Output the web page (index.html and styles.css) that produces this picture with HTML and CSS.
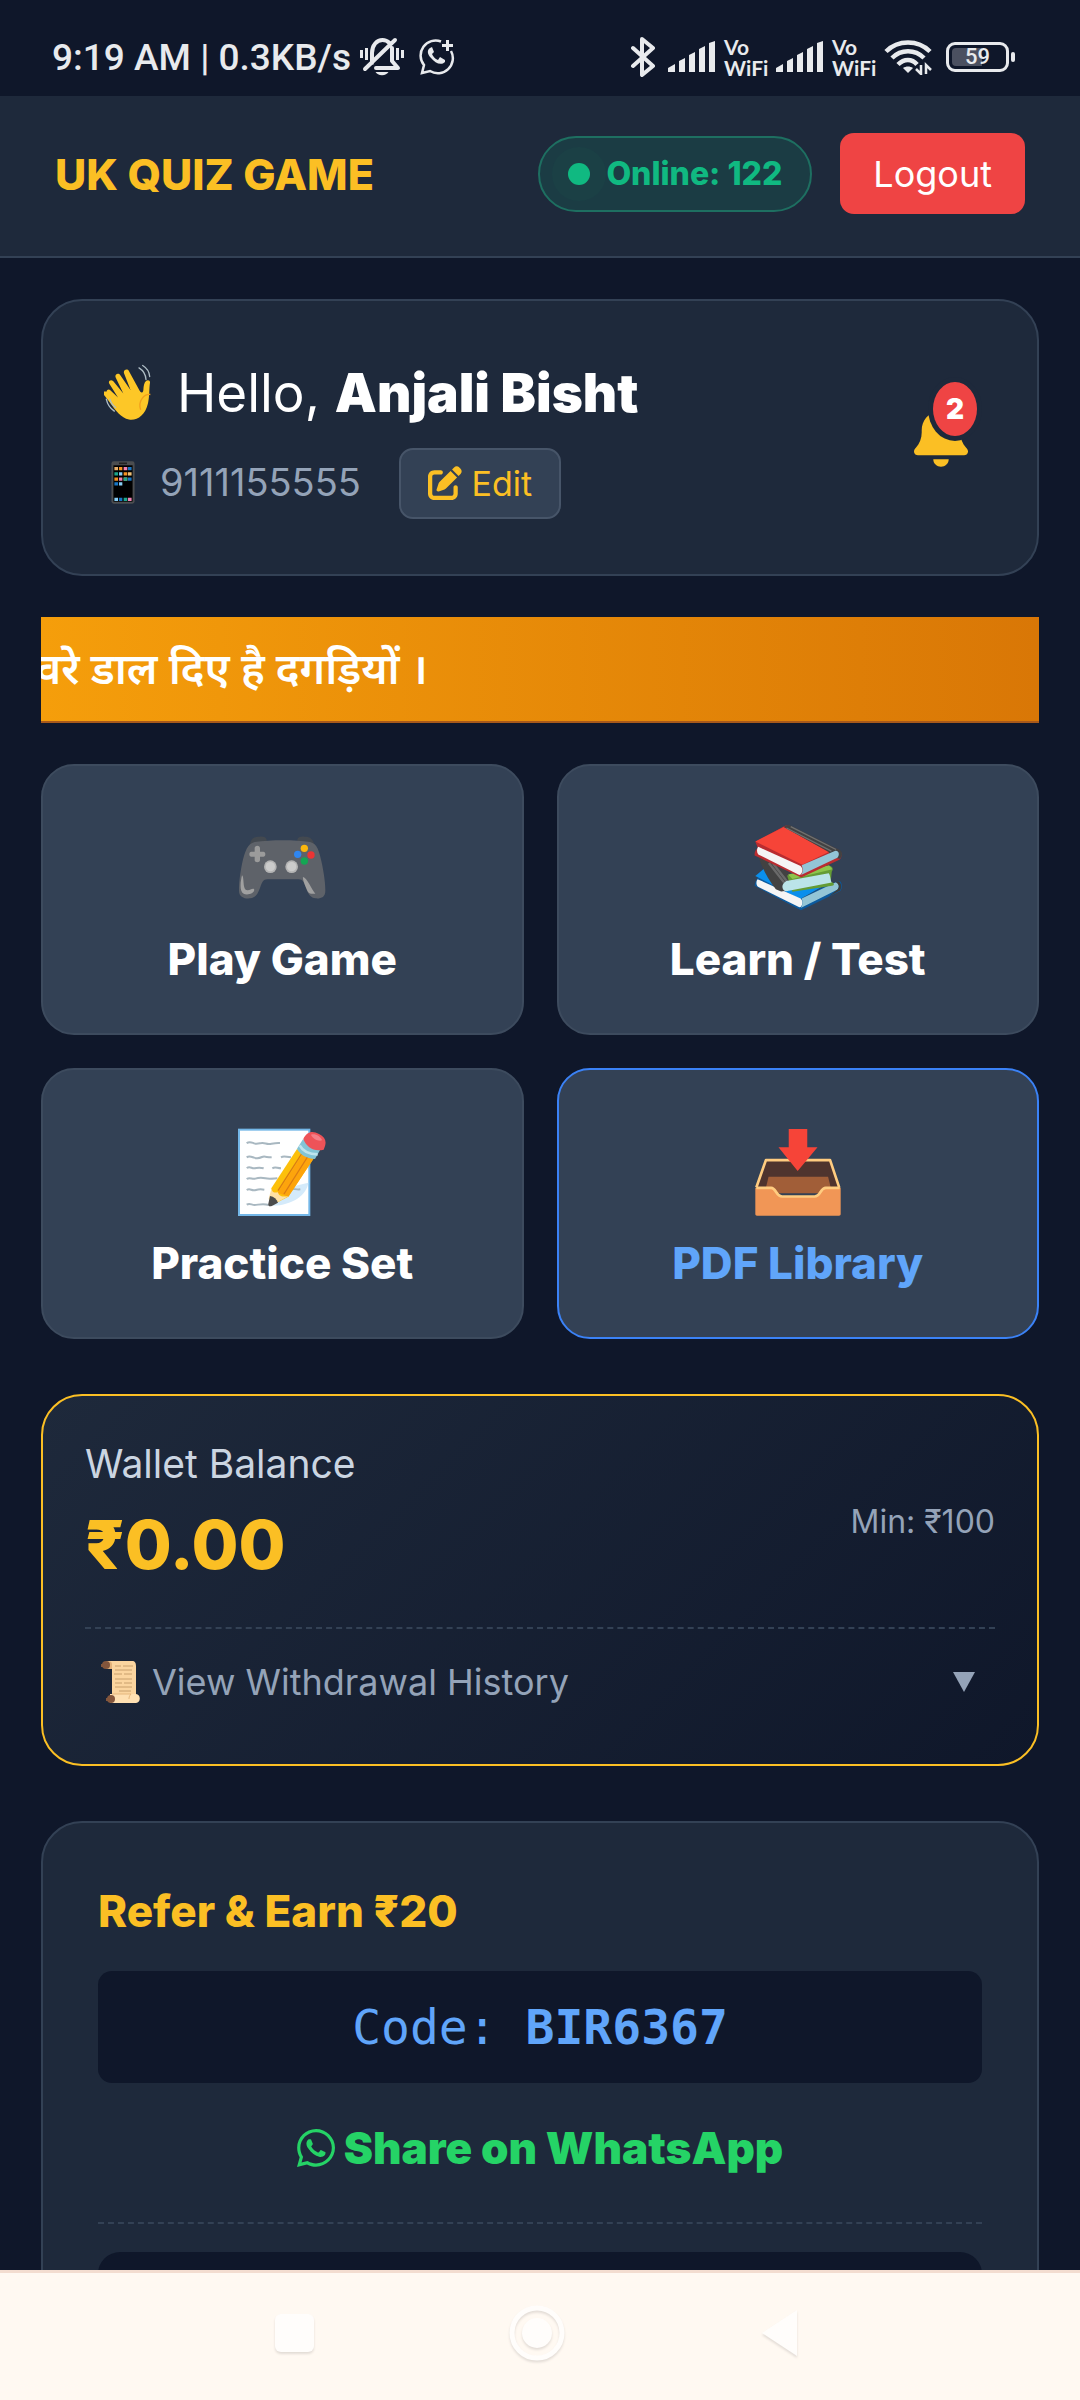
FILE: index.html
```html
<!DOCTYPE html>
<html lang="en">
<head>
<meta charset="UTF-8" />
<meta name="viewport" content="width=device-width, initial-scale=1" />
<title>UK Quiz Game</title>
<link rel="stylesheet" href="styles.css">
</head>
<body>

<div class="status-bar">
  <div class="status-left">
    <span>9:19 AM | 0.3KB/s</span>
    <svg width="46" height="40" viewBox="356 38 46 40" fill="none" stroke="#e8eaed">
      <path d="M358.500 51v8M363.500 49v12M394.500 49v12M399.500 51v8" stroke-width="3"/>
      <path d="M369 64v-10c0-8 5-13 10.500-13 3 0 5 1 7 3M389 49v13l6 7h-22M362 70l30-29" stroke-width="4" stroke-linecap="round" stroke-linejoin="round"/>
      <path d="M372.500 73h13a7 5 0 0 1-13 0z" fill="#e8eaed" stroke="none"/>
    </svg>
    <svg width="36" height="36" viewBox="416 40 36 36" fill="none" stroke="#e8eaed">
      <path d="M438 42.500A15 15 0 0 0 421 66l-2 8 8-2a15 15 0 0 0 21-20" stroke-width="2.500"/>
      <path d="M444.500 41v11M439 46.500h11" stroke-width="3"/>
      <path d="M427 49c-3 2-3 6 1 10 4 5 10 8 14 4l0-2-5-3-2 3c-3-1-5-4-6-6l2-2-2-5z" fill="#e8eaed" stroke="none"/>
    </svg>
  </div>
  <div class="status-right">
    <svg width="26" height="40" viewBox="629 37 26 40" fill="none" stroke="#e8eaed" stroke-width="4" stroke-linejoin="round" stroke-linecap="round">
      <path d="M632 48l20 18-11 9V39l11 9-20 18"/>
    </svg>
    <svg class="signal" width="48" height="32" viewBox="0 0 48 32" fill="#e8eaed">
      <path d="M0 31v-4l7-4v8zM11 31V20l6-3v14zM21 31V14l6-3v20zM31 31V8l6-3v26zM41 31V2l6-2v31z"/>
    </svg>
    <span class="vowifi"><span>Vo</span><span>WiFi</span></span>
    <svg class="signal" width="48" height="32" viewBox="0 0 48 32" fill="#e8eaed">
      <path d="M0 31v-4l7-4v8zM11 31V20l6-3v14zM21 31V14l6-3v20zM31 31V8l6-3v26zM41 31V2l6-2v31z"/>
    </svg>
    <span class="vowifi"><span>Vo</span><span>WiFi</span></span>
    <svg class="wifi" width="48" height="36" viewBox="884 40 48 36" fill="none" stroke="#e8eaed">
      <path d="M886 52.500c12-12 32-12 44 0M892 59c9-9 23-9 32 0M898 65.500c6-6 14-6 19 0" stroke-width="4.500"/>
      <path d="M903 69c3-2 7-2 10 0l-5 5z" fill="#e8eaed" stroke="none"/>
      <path d="M921 66v9l-5-5M926 75v-9l5 5" stroke-width="2.500"/>
    </svg>
    <span class="battery"><span class="battery-level">59</span></span>
  </div>
</div>

<header class="top-bar">
  <h1 class="logo">UK QUIZ GAME</h1>
  <div class="top-actions">
    <span class="online"><span class="dot"></span>Online: 122</span>
    <button class="logout-btn">Logout</button>
  </div>
</header>

<main class="content">

  <section class="card profile">
    <div>
      <p class="hello">
        <svg class="hand" width="52" height="57" viewBox="27 30 156 170">
          <path d="M35 112c0-6 7-8 11-4L69 130 43 89c-5-9 5-15 12-8l30 37-23-48c-4-10 8-15 14-7l31 45-20-51c-3-10 10-15 15-6l32 59c4 8 10 6 11-2 1-13 2-23 9-28 5-4 12-1 11 6-3 17-1 42-6 61-8 36-33 53-57 49-24-4-40-27-57-50-8-12-23-26-23-34z" fill="#fdc727"/>
          <path d="M166 121c-19-2-38 19-29 46" fill="none" stroke="#f2a01c" stroke-width="4"/>
          <path d="M34 135c3 15 12 28 24 36M45 135c2 10 8 19 17 25M132 41c13 8 20 20 21 35M143 34c13 8 20 18 21 33" fill="none" stroke="#aebdc5" stroke-width="4" stroke-linecap="round"/>
        </svg>
        Hello, <strong>Anjali Bisht</strong>
      </p>
      <div class="phone-row">
        <span class="phone">
          <svg class="mobile" width="24" height="43" viewBox="48 311 72 130">
            <rect x="49" y="312" width="70" height="128" rx="7" fill="#4b4d50"/>
            <rect x="55" y="324" width="58" height="110" fill="#000"/>
            <path d="M72 318h24" stroke="#222" stroke-width="5"/>
            <path d="M58 329h11v10H58zM86 361h11v10H86z" fill="#e8b06d"/>
            <path d="M72 329h10v10H72zM86 345h11v10H86zM58 361h11v10H58z" fill="#f59322"/>
            <path d="M86 329h11v10H86zM72 361h10v10H72zM99 422h11v10H99z" fill="#f183b4"/>
            <path d="M99 329h11v10H99zM58 375h11v10H58zM99 361h11v10H99zM72 422h10v10H72z" fill="#1976c4"/>
            <path d="M58 345h11v10H58zM86 361h11v10H86zM86 422h11v10H86z" fill="#1da68c"/>
            <path d="M72 345h10v10H72zM72 375h10v10H72zM58 422h11v10H58z" fill="#87cdf4"/>
            <path d="M99 345h11v10H99z" fill="#efc078"/>
          </svg>9111155555
        </span>
        <button class="edit-btn">
          <svg width="34" height="34" viewBox="0 0 512 512" fill="currentColor"><path d="M471.6 21.7c-21.9-21.9-57.3-21.9-79.2 0L362.3 51.700l97.900 97.900 30.100-30.100c21.900-21.900 21.900-57.300 0-79.200L471.600 21.700zm-299.200 220c-6.100 6.100-10.800 13.600-13.500 21.900l-29.600 88.800c-2.900 8.600-.6 18.100 5.800 24.600s15.900 8.700 24.600 5.800l88.800-29.600c8.200-2.700 15.700-7.400 21.900-13.500L437.700 172.300 339.700 74.300 172.400 241.700zM96 64C43 64 0 107 0 160V416c0 53 43 96 96 96H352c53 0 96-43 96-96V320c0-17.700-14.300-32-32-32s-32 14.300-32 32v96c0 17.700-14.300 32-32 32H96c-17.700 0-32-14.300-32-32V160c0-17.700 14.300-32 32-32h96c17.700 0 32-14.300 32-32s-14.300-32-32-32H96z"/></svg>
          Edit
        </button>
      </div>
    </div>
    <button class="bell-btn" aria-label="Notifications">
      <svg width="54" height="62" viewBox="0 0 448 512" fill="currentColor"><path d="M224 0c-17.700 0-32 14.300-32 32V51.200C119 66 64 130.600 64 208v18.800c0 47-17.300 92.400-48.500 127.600l-7.400 8.300c-8.400 9.400-10.400 22.900-5.300 34.400S19.400 416 32 416H416c12.600 0 24-7.400 29.200-18.900s3.100-25-5.300-34.400l-7.400-8.300C401.300 319.200 384 273.900 384 226.800V208c0-77.400-55-142-128-156.800V32c0-17.700-14.300-32-32-32zm45.300 493.300c12-12 18.700-28.300 18.700-45.300H224 160c0 17 6.700 33.300 18.700 45.300s28.300 18.700 45.300 18.700s33.300-6.700 45.300-18.700z"/></svg>
      <span class="badge">2</span>
    </button>
  </section>

  <div class="ticker" lang="hi"><span>वरे डाल दिए है दगड़ियों ।</span></div>

  <nav class="menu">
    <a href="#" class="menu-item">
      <svg width="88" height="88" viewBox="116 130 264 264">
        <path d="M152 190c4-18 14-22 28-22 14-1 20 2 22 9v14zM344 190c-4-18-14-22-28-22-14-1-20 2-22 9v14z" fill="#434950"/>
        <path d="M166 184c50-7 120-7 166 0 22 5 28 28 36 66 7 35 10 60 10 80 0 20-13 24-29 23-15-2-21-10-29-31-6-17-9-26-22-26H204c-13 0-16 9-22 26-8 21-14 29-29 31-16 2-34-3-34-23 0-20 2-45 9-80 8-38 17-61 38-66z" fill="#5e6269"/>
        <path d="M174 195c5 0 8 3 8 8v10h10c8 0 8 15 0 15h-10v10c0 9-16 9-16 0v-10h-10c-8 0-8-15 0-15h10v-10c0-5 3-8 8-8z" fill="#9b9b9b"/>
        <g fill="#b4b4b4"><circle cx="213" cy="258" r="19"/><circle cx="277" cy="258" r="19"/></g>
        <g fill="#cbcbcb"><circle cx="213" cy="258" r="14"/><circle cx="277" cy="258" r="14"/></g>
        <circle cx="315" cy="203" r="11" fill="#fcb70d"/>
        <circle cx="295" cy="221" r="11" fill="#2f86f0"/>
        <circle cx="335" cy="223" r="11" fill="#ec3434"/>
        <circle cx="315" cy="241" r="11" fill="#13a653"/>
        <path d="M128 284c8 5 0 46 17 45 8 0 12-6 19-4 5 14-22 20-31 14-14-8-9-38-5-55zM311 289c12 2 26 38 37 50-13 2-20-1-24-9-6-14-15-34-13-41z" fill="#a0a0a0"/>
      </svg>
      Play Game
    </a>
    <a href="#" class="menu-item">
      <svg width="88" height="88" viewBox="160 131 266 266">
        <path d="M162 318c0-10 6-20 10-26l132 64 78-42 38-10c8 8 7 24 0 30l-118 58z" fill="#0c5a9e"/>
        <path d="M164 288l26-22 190 46-80 46z" fill="#0a8fec"/>
        <path d="M171 298l130 58c9 8 6 25-4 27L172 321c-6-5-6-18-1-23z" fill="#f5f5f5"/>
        <path d="M304 356l102-48c10-3 14 12 7 21l-112 56c6-7 7-22 3-29z" fill="#93c5d6"/>
        <path d="M386 350l33-17c7-8 6-22-3-28l-9 3c10 4 12 14 6 20z" fill="#3c3c3c"/>
        <path d="M174 231l22 7 76 44-8 50-22 3-16-7c-24-29-44-70-52-97z" fill="#424242"/>
        <path d="M205 249l46 59M218 251l42 54" stroke="#6a6a6a" stroke-width="7"/>
        <path d="M260 287l130-29c10 3 9 12 5 17l-3 30c12 5 12 12 4 13l-120 18z" fill="#659c35"/>
        <path d="M263 284l124-28 10 12-121 29z" fill="#8dc54b"/>
        <path d="M258 303l128-23c5 6 5 22 9 28l-138 26c-14-3-16-22 1-31z" fill="#bbe4e9"/>
        <path d="M162 226c-1-10 2-18 10-22l-8-19 84-46c8-5 18-5 26 0l145 72c8 6 8 21-1 28l-115 54z" fill="#b92c30"/>
        <path d="M164 184l86-44 136 76-80 38z" fill="#f64438"/>
        <path d="M250 140c7-5 16-7 24-3l146 73c8 6 8 20-1 26l-29-6-4-14z" fill="#424242"/>
        <path d="M258 143l136 70M271 139l137 69" stroke="#707070" stroke-width="4"/>
        <path d="M173 200l128 58c9 9 5 25-4 27L173 223c-5-6-5-18 0-23z" fill="#f5f5f5"/>
        <path d="M304 256l102-44c11-1 14 13 6 21l-110 52c7-7 6-20 2-29z" fill="#93c5d6"/>
      </svg>
      Learn / Test
    </a>
    <a href="#" class="menu-item">
      <svg width="88" height="88" viewBox="26 36 264 264">
        <rect x="29" y="41" width="211" height="256" fill="#fff" stroke="#74b7e8" stroke-width="6"/>
        <path d="M237 200c-4 34-45 68-108 69l70-60z" fill="#d4eafa"/>
        <g fill="none" stroke="#a9b8c1" stroke-width="6">
          <path d="M52 82c8-7 14-3 22 0s16 0 24-1 14 4 22 3 18-4 32-3"/>
          <path d="M52 124c8-6 14-2 22 1s16 2 24-2 16 2 29 1M155 124c8-5 14-1 30 0"/>
          <path d="M52 156c10-6 14 1 22 1s12-4 29 0M129 157c9-6 14 0 26 0"/>
          <path d="M52 189c10-7 16 2 26-1s20-3 30-1 18 1 36 0"/>
          <path d="M52 222c10-6 14 2 22 1s12-5 31-2M180 221c12-6 18 1 33-1"/>
          <path d="M52 266c10-6 14 1 24 1s24-6 42 0"/>
        </g>
        <path d="M126 217l77-118 53 24-79 119-53 27z" fill="#fdc00b"/>
        <path d="M145 230l84-130 27 23-79 119z" fill="#fda40c"/>
        <path d="M146 224l82-128M164 234l80-126" stroke="#db7c14" stroke-width="4"/>
        <path d="M128 212c-2 15 4 20 18 17 2 10 10 16 32 11l-54 30-6-22z" fill="#ffe0a4"/>
        <path d="M122 240l-5 23c-1 8 4 10 12 6l17-9c-4-11-12-18-24-20z" fill="#4b4b4b"/>
        <path d="M203 98l18-28 55 25-19 34c-26-2-45-13-54-31z" fill="#83c4d5"/>
        <path d="M211 88c9 17 29 27 54 27" fill="none" stroke="#bfe4ed" stroke-width="8"/>
        <path d="M222 69c10-23 28-26 47-15 20 11 25 23 14 47-30 7-51-7-61-32z" fill="#ee5358"/>
        <path d="M245 56c10-5 30 4 33 17-11 4-29-5-33-17z" fill="#f47f88"/>
      </svg>
      Practice Set
    </a>
    <a href="#" class="menu-item active">
      <svg width="88" height="88" viewBox="160 1040 266 266">
        <path d="M200 1136h188l30 86H168z" fill="#4f342e"/>
        <path d="M204 1187h180l12 50H192z" fill="#a15e38"/>
        <path d="M167 1220l29-83h194l28 84" fill="none" stroke="#ffcc80" stroke-width="8" stroke-linejoin="round"/>
        <path d="M164 1221h48c15 0 14 26 33 26h98c19 0 17-26 34-26h45v79c0 3-2 5-5 5H169c-3 0-5-2-5-5z" fill="#f19656"/>
        <path d="M167 1221h45c15 0 14 26 33 26h98c19 0 17-26 34-26h42" fill="none" stroke="#ffcc80" stroke-width="8"/>
        <path d="M265 1043h56v55h31l-60 72-58-72h31z" fill="#f64438"/>
      </svg>
      PDF Library
    </a>
  </nav>

  <section class="card wallet">
    <div class="wallet-top">
      <div>
        <p class="wallet-label">Wallet Balance</p>
        <p class="wallet-amount">₹0.00</p>
      </div>
      <span class="wallet-min">Min: ₹100</span>
    </div>
    <button class="history-btn">
      <svg width="39" height="44" viewBox="0 0 39 44">
        <path d="M5 1h26c3 0 4 2 4 5v28H11V9H5z" fill="#fbd59f"/>
        <path d="M11 9V4c0-2-2-3-4-3h-2v8z" fill="#e3b27a"/>
        <path d="M9 34h26c5 0 5 9 0 9H9z" fill="#ffe0b2"/>
        <path d="M11 34h19c-2 2-2 4-2 5" fill="none" stroke="#e5b67d" stroke-width="1"/>
        <path d="M14 6h6M22 6h10M14 10h17M13 14h8M23 14h8M14 19h17M14 23h7M23 23h8M14 27h17M18 31h12" stroke="#c9a06c" stroke-width="1"/>
        <g fill="#84563c"><circle cx="5" cy="5" r="4"/><circle cx="10" cy="39" r="4"/><path d="M0 4h3v3H0zM5 38h3v3H5z"/></g>
      </svg>
      <span>View Withdrawal History</span>
      <svg class="arrow" width="22" height="20" viewBox="0 0 22 20" fill="currentColor"><path d="M0 0h22L11 20z"/></svg>
    </button>
  </section>

  <section class="card refer">
    <h2 class="refer-title">Refer &amp; Earn ₹20</h2>
    <div class="code-box">Code: <b>BIR6367</b></div>
    <a href="#" class="share-link">
      <svg width="38" height="44" viewBox="0 0 448 512" fill="currentColor"><path d="M380.900 97.100C339 55.100 283.200 32 223.900 32c-122.400 0-222 99.600-222 222 0 39.100 10.200 77.300 29.600 111L0 480l117.700-30.900c32.400 17.700 68.900 27 106.100 27h.1c122.300 0 224.100-99.600 224.100-222 0-59.300-25.200-115-67.100-157zm-157 341.600c-33.200 0-65.700-8.900-94-25.700l-6.700-4-69.800 18.300L72 359.200l-4.400-7c-18.500-29.400-28.200-63.300-28.200-98.200 0-101.700 82.800-184.500 184.600-184.500 49.300 0 95.600 19.200 130.400 54.100 34.800 34.900 56.200 81.200 56.100 130.500 0 101.800-84.900 184.600-186.600 184.600zm101.200-138.200c-5.500-2.800-32.800-16.200-37.900-18-5.100-1.900-8.800-2.800-12.500 2.800-3.700 5.600-14.300 18-17.600 21.800-3.200 3.700-6.500 4.200-12 1.400-32.600-16.300-54-29.100-75.500-66-5.700-9.800 5.700-9.100 16.300-30.300 1.800-3.700.9-6.900-.5-9.700-1.400-2.800-12.500-30.100-17.100-41.200-4.500-10.800-9.100-9.300-12.500-9.300-3.200-.2-6.900-.2-10.600-.2-3.700 0-9.700 1.400-14.800 6.900-5.100 5.600-19.400 19-19.400 46.300 0 27.300 19.900 53.700 22.600 57.400 2.800 3.700 39.100 59.700 94.800 83.800 35.200 15.200 49 16.500 66.600 13.900 10.700-1.600 32.800-13.400 37.400-26.400 4.600-13 4.600-24.100 3.200-26.400-1.300-2.500-5-3.900-10.500-6.600z"/></svg>
      Share on WhatsApp
    </a>
    <div class="refer-stats"></div>
  </section>

</main>

<footer class="nav-bar">
  <button aria-label="Recent apps"><svg width="60" height="60" viewBox="0 0 60 60"><rect x="11" y="11" width="39" height="38" rx="6"/></svg></button>
  <button aria-label="Home"><svg width="60" height="60" viewBox="0 0 60 60"><circle class="ring" cx="30" cy="30" r="25"/><circle cx="30" cy="30" r="15"/></svg></button>
  <button aria-label="Back"><svg width="60" height="60" viewBox="0 0 60 60"><path d="M12 30L47 7v46z"/></svg></button>
</footer>

</body>
</html>
```
FILE: styles.css
```css
* {
  box-sizing: border-box;
}
body {
  font-family: Inter, "Noto Sans", sans-serif;
  background: #0f172a;
  color: #fff;
  margin: 0;
  height: 100vh;
  display: flex;
  flex-direction: column;
  overflow: hidden;
}
h1, h2, p {
  margin: 0;
}
a {
  text-decoration: none;
}
button {
  font-family: inherit;
  cursor: pointer;
}
svg {
  flex: none;
}

/* phone status bar */
.status-bar {
  display: flex;
  justify-content: space-between;
  align-items: center;
  height: 96px;
  padding: 18px 71px 0 52px;
  font-family: Roboto, sans-serif;
  font-size: 37px;
  font-weight: 500;
  color: #e8eaed;
  flex: none;
}
.status-left, .status-right {
  display: flex;
  align-items: center;
}
.status-left {
  gap: 8px;
}
.status-left svg + svg {
  margin-left: 6px;
}
.status-right {
  gap: 8px;
}
.status-right .signal {
  margin-left: 4px;
}
.signal + .vowifi + .signal {
  margin-left: 0;
}
.vowifi {
  display: flex;
  flex-direction: column;
  width: 44px;
  font-family: Lato, sans-serif;
  font-size: 21px;
  font-weight: 700;
  line-height: 21px;
}
.battery {
  position: relative;
  display: flex;
  width: 63px;
  height: 30px;
  margin-left: 6px;
  padding: 3px;
  border: 3px solid #e8eaed;
  border-radius: 9px;
}
.battery::after {
  content: "";
  position: absolute;
  right: -9px;
  top: 7px;
  width: 4px;
  height: 10px;
  border-radius: 2px;
  background: #e8eaed;
}
.battery-level {
  flex: 1;
  border-radius: 4px;
  background: linear-gradient(90deg, #4b5060 59%, transparent 59%);
  font-size: 22px;
  line-height: 18px;
  text-align: center;
}

/* header */
.top-bar {
  display: flex;
  justify-content: space-between;
  align-items: center;
  height: 162px;
  padding: 0 55px 5px;
  background: #1e293b;
  border-bottom: 2px solid #334155;
  flex: none;
}
.logo {
  font-size: 43px;
  font-weight: 800;
  color: #fbbf24;
}
.top-actions {
  display: flex;
  align-items: center;
  gap: 28px;
}
.online {
  display: flex;
  align-items: center;
  gap: 16px;
  height: 76px;
  padding: 0 28px;
  border: 2px solid #1e6f61;
  border-radius: 38px;
  background: #1b3c44;
  color: #10b981;
  font-size: 32px;
  font-weight: 800;
}
.dot {
  width: 22px;
  height: 22px;
  border-radius: 50%;
  background: #10b981;
  box-shadow: 0 0 0 16px rgba(16, 185, 129, 0.03);
}
.logout-btn {
  height: 81px;
  padding: 0 33px;
  border: none;
  border-radius: 14px;
  background: #ef4444;
  color: #fff;
  font-size: 36px;
}

.content {
  flex: 1;
  min-height: 0;
  overflow: hidden;
  padding: 41px 41px 0;
}
.card {
  padding: 55px;
  background: #1e293b;
  border: 2px solid #334155;
  border-radius: 41px;
}

/* profile */
.profile {
  display: flex;
  justify-content: space-between;
  align-items: center;
}
.hello {
  font-size: 53px;
  line-height: 74px;
  padding-left: 6px;
}
.hello strong {
  font-weight: 900;
}
.hand {
  vertical-align: -9px;
  margin-right: 6px;
}
.phone-row {
  display: flex;
  align-items: baseline;
  gap: 38px;
  margin-top: 18px;
}
.phone {
  color: #94a3b8;
  font-size: 38px;
}
.mobile {
  vertical-align: -8px;
  margin: 0 25px 0 13px;
}
.edit-btn {
  height: 71px;
  padding: 0 27px;
  border: 2px solid #475569;
  border-radius: 14px;
  background: #334155;
  color: #fbbf24;
  font-size: 34px;
}
.edit-btn svg {
  vertical-align: -4px;
}
.bell-btn {
  position: relative;
  display: flex;
  margin: 0 14px 3px 0;
  padding: 0;
  border: none;
  background: none;
  color: #fbbf24;
}
.badge {
  position: absolute;
  top: -23px;
  left: 19px;
  width: 44px;
  height: 54px;
  border-radius: 50%;
  background: #ef4444;
  box-shadow: 0 0 0 5px #1e293b;
  color: #fff;
  font-size: 28px;
  font-weight: 900;
  line-height: 54px;
}

/* scrolling news */
.ticker {
  height: 106px;
  margin-top: 41px;
  overflow: hidden;
  background: linear-gradient(90deg, #f59e0b, #d97706);
  border-bottom: 2px solid #a8591a;
  font-family: "Noto Sans", "Noto Sans Devanagari", sans-serif;
  font-size: 43px;
  font-weight: 600;
  line-height: 101px;
  white-space: nowrap;
}
.ticker span {
  margin-left: -5px;
}

/* menu */
.menu {
  display: grid;
  grid-template-columns: 1fr 1fr;
  gap: 33px;
  margin-top: 41px;
}
.menu-item {
  display: flex;
  flex-direction: column;
  align-items: center;
  gap: 14px;
  padding: 58px 20px 41px;
  border: 2px solid #3d4b5e;
  border-radius: 33px;
  background: #334155;
  color: #fff;
  font-size: 44px;
  font-weight: 800;
  line-height: 66px;
}
.menu-item.active {
  border-color: #3b82f6;
  color: #60a5fa;
}

/* wallet */
.wallet {
  margin-top: 55px;
  padding: 40px 42px;
  background: linear-gradient(135deg, #1e293b, #0f172a);
  border-color: #fbbf24;
}
.wallet-top {
  display: flex;
  justify-content: space-between;
  align-items: center;
}
.wallet-label {
  color: #cbd5e1;
  font-size: 39px;
  line-height: 56px;
}
.wallet-amount {
  color: #fbbf24;
  font-size: 68px;
  font-weight: 800;
  line-height: 105px;
}
.wallet-min {
  padding-top: 10px;
  color: #94a3b8;
  font-size: 32px;
}
.history-btn {
  display: flex;
  align-items: center;
  gap: 12px;
  width: 100%;
  margin-top: 30px;
  padding: 26px 20px 15px 16px;
  border: none;
  border-top: 2px dashed #334155;
  background: none;
  color: #94a3b8;
  font-size: 36px;
  line-height: 54px;
}
.arrow {
  margin-left: auto;
}

/* refer */
.refer {
  margin-top: 55px;
}
.refer-title {
  color: #fbbf24;
  font-size: 44px;
  font-weight: 800;
  line-height: 66px;
}
.code-box {
  margin-top: 27px;
  border-radius: 14px;
  background: #0f172a;
  color: #60a5fa;
  font-family: "DejaVu Sans Mono", monospace;
  font-size: 48px;
  line-height: 112px;
  text-align: center;
}
.share-link {
  display: flex;
  justify-content: center;
  align-items: center;
  gap: 9px;
  padding: 32px 0 41px;
  border-bottom: 2px dashed #334155;
  color: #25d366;
  font-size: 44px;
  font-weight: 900;
  line-height: 66px;
}
.refer-stats {
  height: 160px;
  margin-top: 28px;
  border-radius: 22px;
  background: #0f172a;
}

/* phone navigation */
.nav-bar {
  display: flex;
  justify-content: center;
  gap: 183px;
  height: 130px;
  padding: 0 6px 8px 0;
  border-top: 3px solid #f3ddd0;
  background: #fff9f2;
  flex: none;
}
.nav-bar button {
  display: flex;
  align-items: center;
  padding: 0;
  border: none;
  background: none;
}
.nav-bar svg {
  fill: #fffdfb;
  filter: drop-shadow(0 2px 1px #e3dcd6);
}
.nav-bar .ring {
  fill: none;
  stroke: #fffdfb;
  stroke-width: 5;
}
```
